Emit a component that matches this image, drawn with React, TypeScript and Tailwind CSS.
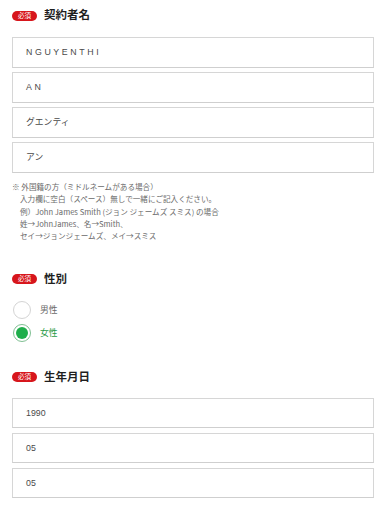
const jp = { fontFamily: '"Liberation Sans", "Noto Sans CJK JP", sans-serif' };
const noteFont = { fontFamily: '"Noto Sans CJK JP", "Liberation Sans", sans-serif' };

function RequiredBadge() {
  return (
    <span className="flex h-[10px] w-[25px] items-center justify-center rounded-full bg-[#d7161c] text-[6.5px] leading-none text-white">
      必須
    </span>
  );
}

function SectionTitle({ label }: { label: string }) {
  return (
    <div className="flex h-[12px] items-center gap-[7px]">
      <RequiredBadge />
      <span className="text-[11.5px] font-bold leading-none text-[#1f1f1f]">{label}</span>
    </div>
  );
}

function Field({ value, spaced, h }: { value: string; spaced?: boolean; h: string }) {
  return (
    <div
      className={`flex items-center border border-[#d6d6d6] border-b-[#cfcfcf] bg-white pl-[13px] text-[8.8px] text-[#4a4a4a] ${h} ${
        spaced ? "tracking-[2.6px]" : ""
      }`}
    >
      {value}
    </div>
  );
}

export default function App() {
  const nameFields = [
    { value: "NGUYENTHI", spaced: true },
    { value: "AN", spaced: true },
    { value: "グエンティ" },
    { value: "アン" },
  ];

  return (
    <div className="min-h-[512px] w-[384px] bg-white pl-3 pr-[10px] pt-[10px]" style={jp}>
      {/* 契約者名 */}
      <SectionTitle label="契約者名" />
      <div className="mt-[15px] flex flex-col gap-[4px]">
        {nameFields.map((f) => (
          <Field key={f.value} value={f.value} spaced={f.spaced} h="h-[31px]" />
        ))}
      </div>
      <div className="mt-[8px] text-[7.6px] leading-[12.3px] text-[#6a6a6a]" style={noteFont}>
        <p>※ 外国籍の方（ミドルネームがある場合）</p>
        <div className="pl-[8px]">
          <p>入力欄に空白（スペース）無しで一緒にご記入ください。</p>
          <p>例）John James Smith (ジョン ジェームズ スミス) の場合</p>
          <p>姓→JohnJames、名→Smith、</p>
          <p>セイ→ジョンジェームズ、メイ→スミス</p>
        </div>
      </div>

      {/* 性別 */}
      <div className="mt-[31px]">
        <SectionTitle label="性別" />
        <div className="mt-[16px] flex flex-col gap-[5px] pl-[1px]">
          <label className="flex items-center gap-[9px]">
            <span className="h-[18px] w-[18px] rounded-full border border-[#d4d4d4] bg-white" />
            <span className="text-[8.8px] text-[#6a6a6a]">男性</span>
          </label>
          <label className="flex items-center gap-[9px]">
            <span className="flex h-[18px] w-[18px] items-center justify-center rounded-full border border-[#7fbf92] bg-white">
              <span className="h-[12px] w-[12px] rounded-full bg-[#1fae4b]" />
            </span>
            <span className="text-[8.8px] text-[#1f9a45]">女性</span>
          </label>
        </div>
      </div>

      {/* 生年月日 */}
      <div className="mt-[29px]">
        <SectionTitle label="生年月日" />
        <div className="mt-[15px] flex flex-col gap-[5px]">
          <Field value="1990" h="h-[30px]" />
          <Field value="05" h="h-[30px]" />
          <Field value="05" h="h-[30px]" />
        </div>
      </div>
    </div>
  );
}
